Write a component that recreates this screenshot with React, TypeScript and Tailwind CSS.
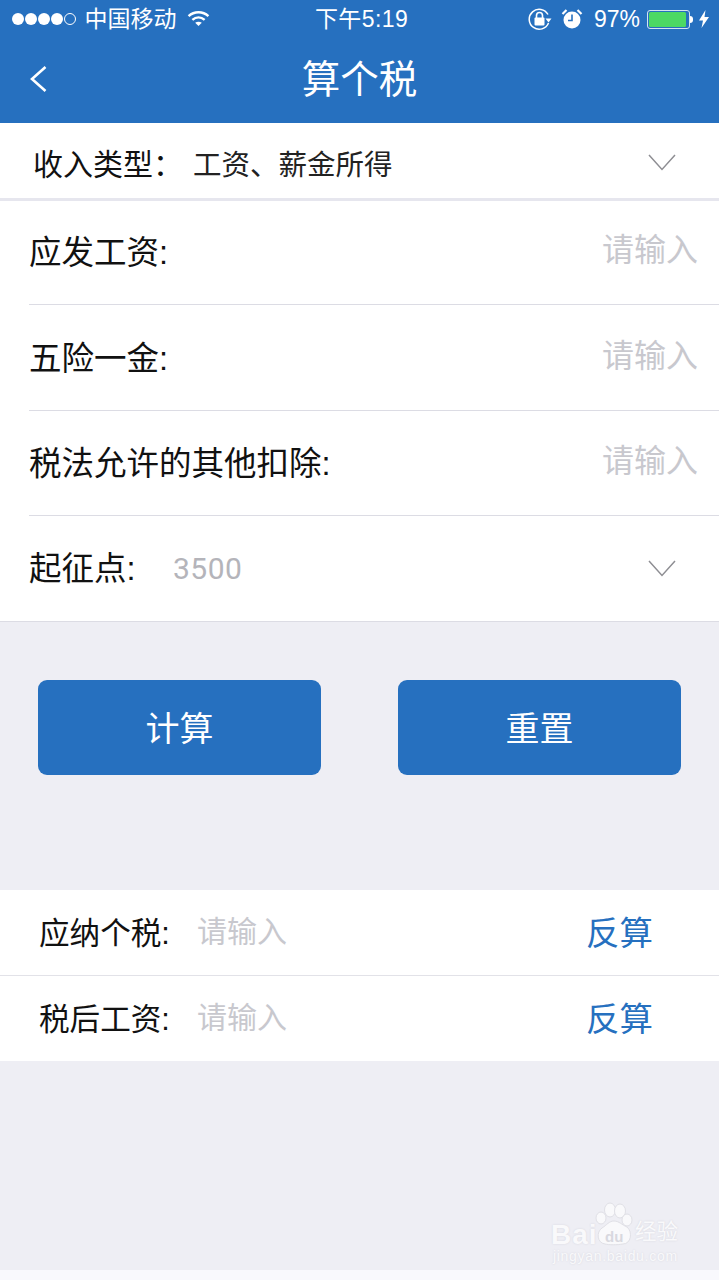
const cjk = "font-['Liberation_Sans','Noto_Sans_CJK_SC',sans-serif]"

const DownArrow = () => {
  return (
    <svg width="28" height="17" viewBox="0 0 28 17" fill="none" stroke="#8e8e93" strokeWidth="1.5">
      <path d="M1 1L14 15.5L27 1" />
    </svg>
  )
}

const StatusBar = () => {
  return (
    <div className="h-[38px] flex items-center justify-between text-white text-[23px] relative">
      <div className="flex items-center pl-3">
        <div className="flex gap-[1.5px]">
          <span className="w-[11.5px] h-[11.5px] rounded-full bg-white" />
          <span className="w-[11.5px] h-[11.5px] rounded-full bg-white" />
          <span className="w-[11.5px] h-[11.5px] rounded-full bg-white" />
          <span className="w-[11.5px] h-[11.5px] rounded-full bg-white" />
          <span className="w-[11.5px] h-[11.5px] rounded-full border border-white" />
        </div>
        <span className="ml-[9px] leading-none">中国移动</span>
        <svg className="ml-[10px] -mt-[1px]" width="23" height="17" viewBox="0 0 24 18" fill="none" stroke="white" strokeWidth="2.6">
          <path d="M1.5 6.5C7.5 1 16.5 1 22.5 6.5" />
          <path d="M5.5 10.5C9.5 7 14.5 7 18.5 10.5" />
          <path d="M12 17L8.5 13.5C10.5 12 13.5 12 15.5 13.5Z" fill="white" stroke="none" />
        </svg>
      </div>
      <span className="absolute left-0 right-0 text-center leading-none pl-[4px] tracking-[0.4px]">下午5:19</span>
      <div className="flex items-center pr-[10px]">
        <svg width="24" height="24" viewBox="0 0 24 24" fill="none">
          <path d="M20 7.5A10 10 0 1 0 20.5 16" stroke="white" strokeWidth="1.5" />
          <path d="M17.5 11.5H23.5L20.5 15.5Z" fill="white" />
          <rect x="6.5" y="10.5" width="10" height="8" rx="1" fill="white" />
          <path d="M8.5 11V8.5a3 3 0 0 1 6 0V11" stroke="white" strokeWidth="1.6" />
        </svg>
        <svg className="ml-[9px]" width="22" height="22" viewBox="0 0 22 22" fill="none">
          <circle cx="11" cy="12" r="8.5" fill="white" />
          <path d="M11 6.5V12.5H7" stroke="#2670bf" strokeWidth="1.6" />
          <path d="M1.5 6L5.5 2M20.5 6L16.5 2" stroke="white" strokeWidth="2.2" />
        </svg>
        <span className="ml-[11px] leading-none text-[23px] font-['Liberation_Sans',sans-serif]">97%</span>
        <div className="ml-[7px] w-[43px] h-[19px] rounded-[3px] border border-[#d5e3f2] p-[1px]">
          <div className="w-[96%] h-full rounded-[1.5px] bg-[#4cd964]" />
        </div>
        <span className="w-[3px] h-[7px] bg-white rounded-r-sm" />
        <svg className="ml-[6px]" width="10" height="18" viewBox="0 0 10 18" fill="white">
          <path d="M6.5 0L0 10.5H4L2.5 18L10 7H5.5Z" />
        </svg>
      </div>
    </div>
  )
}

const InputRow = ({ label }: { label: string }) => {
  return (
    <div className="h-[105.5px] ml-[29px] pr-[21px] flex items-center justify-between border-b border-[#dcdce4]">
      <span className="text-[32.5px] text-[#111] leading-none mt-[3px]">{label}</span>
      <span className="text-[32px] text-[#c8c8ce] leading-none -mt-[3px]">请输入</span>
    </div>
  )
}

const ResultRow = ({ label }: { label: string }) => {
  return (
    <div className="h-[85px] pl-[39px] pr-[66px] flex items-center bg-white">
      <span className="text-[30.6px] text-[#111] leading-none w-[158px] mt-[1px]">{label}</span>
      <span className="text-[30px] text-[#c8c8ce] leading-none flex-1 -mt-[1px]">请输入</span>
      <span className="text-[33.5px] text-[#2670bf] leading-none mt-[3px]">反算</span>
    </div>
  )
}

const Watermark = () => {
  const soft = "[text-shadow:0_0_2px_#d4d4dc]"
  return (
    <div className="absolute left-[551px] top-[1202px] w-[128px] h-[62px] text-[#f9f9fb]">
      <svg className="absolute left-[44px] top-0" width="40" height="44" viewBox="0 0 40 44" fill="#f9f9fb" stroke="#e0e0e6" strokeWidth="1">
        <ellipse cx="6" cy="16" rx="5" ry="6" />
        <ellipse cx="15" cy="8" rx="5.5" ry="7" />
        <ellipse cx="25" cy="9" rx="5.5" ry="7" />
        <ellipse cx="32" cy="18" rx="5" ry="6" />
        <path d="M19 19C24 19 27 23 32 25C38 30 36 42 28 42C22 43 14 43 10 42C2 41 1 30 7 26C12 23 14 19 19 19Z" />
      </svg>
      <div className={`absolute top-[19px] left-0 text-[28px] leading-none font-bold tracking-[1px] font-['Liberation_Sans',sans-serif] ${soft}`}>Bai</div>
      <div className="absolute left-[54px] top-[27px] text-[15px] leading-none font-bold text-[#d8d8df] font-['Liberation_Sans',sans-serif]">du</div>
      <div className={`absolute left-[84px] top-[20px] text-[21.5px] leading-none ${soft}`}>经验</div>
      <div className={`absolute left-[2px] top-[47px] text-[14px] leading-none tracking-[0.7px] whitespace-nowrap font-['Liberation_Sans',sans-serif] ${soft}`}>jingyan.baidu.com</div>
    </div>
  )
}

const App = () => {
  return (
    <div className={`${cjk} relative w-[719px] h-[1280px] overflow-hidden bg-[#eeeef4] flex flex-col`}>
      <div className="h-[123px] bg-[#2670bf] shrink-0">
        <StatusBar />
        <div className="h-[85px] relative flex items-center justify-center">
          <svg className="absolute left-[30px] top-[28px]" width="17" height="26" viewBox="0 0 17 26" fill="none" stroke="white" strokeWidth="2.6">
            <path d="M15.5 1L2 13L15.5 25" />
          </svg>
          <span className="text-[38.5px] text-white leading-none">算个税</span>
        </div>
      </div>

      <div className="h-[78px] bg-white border-b-[3px] border-[#e6e6ee] pl-[33px] pr-[43px] flex items-center shrink-0">
        <span className="text-[30px] text-[#111] leading-none w-[160px] mt-[9px]">收入类型：</span>
        <span className="text-[28.5px] text-[#222] leading-none flex-1 mt-[9px]">工资、薪金所得</span>
        <span className="mt-[4px]">
          <DownArrow />
        </span>
      </div>

      <div className="bg-white shrink-0 border-b border-[#dcdce4]">
        <div className="-mt-[1.5px]">
          <InputRow label="应发工资:" />
          <InputRow label="五险一金:" />
          <InputRow label="税法允许的其他扣除:" />
        </div>
        <div className="h-[105px] ml-[29px] pr-[43px] flex items-center">
          <span className="text-[32.5px] text-[#111] leading-none w-[144px] mt-[2px]">起征点:</span>
          <span className="text-[30px] text-[#b4b4ba] leading-none flex-1 font-['Roboto',sans-serif] tracking-[0.5px]">3500</span>
          <DownArrow />
        </div>
      </div>

      <div className="h-[268px] pt-[58px] px-[38px] flex justify-between shrink-0">
        <button className="w-[283px] h-[95px] rounded-[9px] bg-[#2670bf] text-white text-[34px] pt-[3px]">计算</button>
        <button className="w-[283px] h-[95px] rounded-[9px] bg-[#2670bf] text-white text-[34px] pt-[3px]">重置</button>
      </div>

      <div className="shrink-0">
        <ResultRow label="应纳个税:" />
        <div className="h-px bg-[#e2e2e8]" />
        <ResultRow label="税后工资:" />
      </div>

      <div className="flex-1" />
      <div className="h-[10px] bg-[#f9f9fd] shrink-0" />
      <Watermark />
    </div>
  )
}

export default App
